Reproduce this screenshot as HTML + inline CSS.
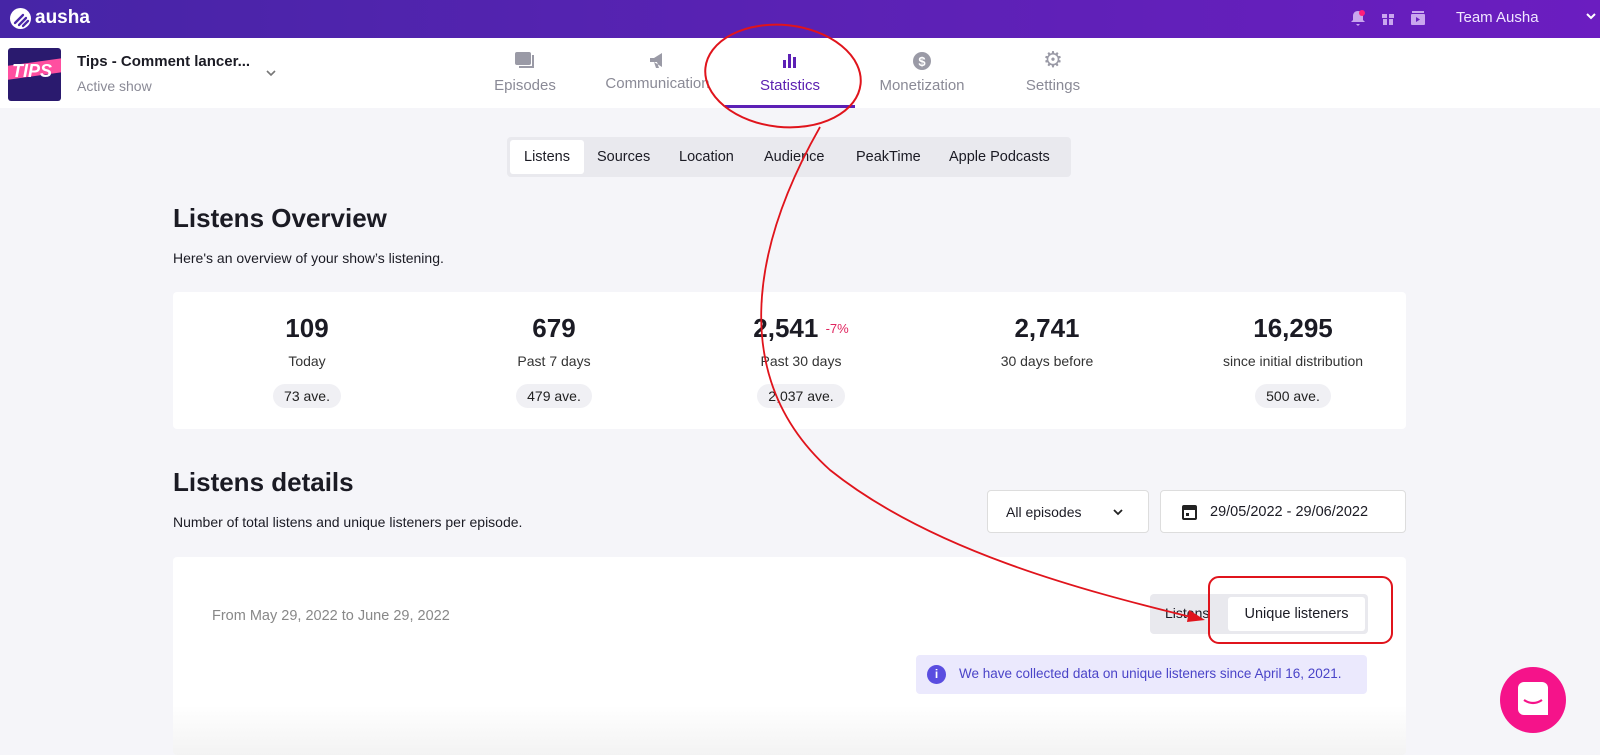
<!DOCTYPE html>
<html><head><style>
*{box-sizing:border-box;margin:0;padding:0}
body{width:1600px;height:755px;overflow:hidden;background:#f5f5f9;font-family:"Liberation Sans",sans-serif;color:#1b1b24;position:relative}
.top{position:absolute;left:0;top:0;width:1600px;height:38px;background:linear-gradient(90deg,#4625a6,#5a22b4 50%,#6b1dc0)}
.nav{position:absolute;top:38px;left:0;width:1600px;height:70px;background:#fff}
.abs{position:absolute}
.tab{position:absolute;top:0;height:70px;text-align:center;color:#8a8a96;font-size:15px}
.tab .ic{position:absolute;top:14px;left:50%;transform:translateX(-50%)}
.tab span{position:absolute;top:39px;left:0;right:0}
.seg{position:absolute;left:507px;top:137px;width:564px;height:40px;background:#e9e9ee;border-radius:4px}
.seg div{position:absolute;top:3px;height:34px;line-height:34px;font-size:14.5px;color:#1b1b24}
.card{position:absolute;background:#fff;border-radius:4px}
.stat{position:absolute;top:0;text-align:center;width:240px}
.stat b{display:block;font-size:26px;font-weight:600;margin-top:21px;height:34px}
.stat .l{font-size:14px;color:#333;margin-top:6px}
.pill{display:inline-block;background:#f0f0f4;border-radius:12px;padding:4px 11px;font-size:14px;margin-top:15px;color:#222}
</style></head><body>
<div class="top">
 <svg class="abs" style="left:10px;top:8px" width="21" height="21" viewBox="0 0 21 21"><circle cx="10.5" cy="10.5" r="10.5" fill="#fff"/><path d="M5 15l8-8M9 17l7-7M13 18l5-5" stroke="#4a27a8" stroke-width="2.3" stroke-linecap="round"/></svg>
 <div class="abs" style="left:35px;top:7px;color:#fff;font-size:19px;font-weight:bold">ausha</div>
 <svg class="abs" style="left:1351px;top:10px" width="14" height="16" viewBox="0 0 14 16"><path d="M7 1c3 0 5 2 5 5v4l2 2H0l2-2V6c0-3 2-5 5-5zM5 14h4l-2 2z" fill="#c9a6ee"/><circle cx="11" cy="3" r="3" fill="#ff1e7a"/></svg>
 <svg class="abs" style="left:1381px;top:10px" width="14" height="16" viewBox="0 0 14 16"><rect x="1" y="4" width="12" height="4" fill="#c9a6ee"/><rect x="2" y="9" width="10" height="6" fill="#c9a6ee"/><rect x="6" y="4" width="2" height="11" fill="#6a1fbf"/></svg>
 <svg class="abs" style="left:1410px;top:10px" width="16" height="16" viewBox="0 0 16 16"><rect x="2" y="1" width="12" height="2" fill="#c9a6ee"/><rect x="1" y="4" width="14" height="11" rx="1" fill="#c9a6ee"/><path d="M6 7l4 2.5-4 2.5z" fill="#6a1fbf"/></svg>
 <div class="abs" style="left:1456px;top:9px;color:#f0e6ff;font-size:15px">Team Ausha</div>
 <svg class="abs" style="left:1586px;top:13px" width="10" height="7" viewBox="0 0 10 7"><path d="M1 1l4 4 4-4" stroke="#fff" stroke-width="2" fill="none"/></svg>
</div>
<div class="nav">
 <div class="abs" style="left:8px;top:10px;width:53px;height:53px;border-radius:3px;background:#2a1a6e;overflow:hidden"><div style="position:absolute;top:14px;left:-4px;width:62px;height:14px;background:#ff4fa0;transform:skewY(-8deg)"></div><div style="position:absolute;top:13px;left:4px;color:#fff;font-weight:900;font-size:18px;font-style:italic">TIPS</div></div>
 <div class="abs" style="left:77px;top:15px;font-size:15px;font-weight:600">Tips - Comment lancer...</div>
 <div class="abs" style="left:77px;top:40px;font-size:14px;color:#8a8a96">Active show</div>
 <svg class="abs" style="left:266px;top:32px" width="10" height="7" viewBox="0 0 10 7"><path d="M1 1l4 4 4-4" stroke="#777" stroke-width="1.6" fill="none"/></svg>
 <div class="tab" style="left:485px;width:80px"><svg class="ic" width="20" height="18"><rect x="0" y="0" width="16" height="13" rx="2" fill="#9a9aa6"/><path d="M18 3v12H4" stroke="#9a9aa6" stroke-width="2" fill="none"/></svg><span>Episodes</span></div>
 <div class="tab" style="left:600px;width:115px"><svg class="ic" width="18" height="18" viewBox="0 0 18 18"><path d="M1 6h4l8-5v14l-8-5H1z M5 10l2 6h3l-2-6" fill="#9a9aa6"/></svg><span style="top:37px">Communication</span></div>
 <div class="tab" style="left:725px;width:130px;color:#5a1eb0"><svg class="ic" width="16" height="16"><rect x="1" y="8" width="3" height="8" fill="#5c20b5"/><rect x="6" y="2" width="3" height="14" fill="#5c20b5"/><rect x="11" y="5" width="3" height="11" fill="#5c20b5"/></svg><span>Statistics</span><div style="position:absolute;left:0;right:0;bottom:0;height:3px;background:#5c20b5"></div></div>
 <div class="tab" style="left:872px;width:100px"><svg class="ic" width="18" height="18"><circle cx="9" cy="9" r="9" fill="#9a9aa6"/><text x="9" y="14" font-size="13" fill="#fff" text-anchor="middle" font-family="Liberation Sans" font-weight="bold">$</text></svg><span>Monetization</span></div>
 <div class="tab" style="left:1013px;width:80px"><span class="ic" style="top:9px;font-size:22px;color:#9a9aa6;left:50%;right:auto">⚙</span><span>Settings</span></div>
</div>
<div class="seg">
 <div style="left:3px;width:74px;background:#fff;border-radius:3px;text-align:center">Listens</div>
 <div style="left:90px">Sources</div><div style="left:172px">Location</div><div style="left:257px">Audience</div><div style="left:349px">PeakTime</div><div style="left:442px">Apple Podcasts</div>
</div>
<div class="abs" style="left:173px;top:203px;font-size:26px;font-weight:bold">Listens Overview</div>
<div class="abs" style="left:173px;top:250px;font-size:14px">Here's an overview of your show’s listening.</div>
<div class="card" style="left:173px;top:292px;width:1233px;height:137px">
 <div class="stat" style="left:14px"><b>109</b><div class="l">Today</div><div class="pill">73 ave.</div></div>
 <div class="stat" style="left:261px"><b>679</b><div class="l">Past 7 days</div><div class="pill">479 ave.</div></div>
 <div class="stat" style="left:508px"><b>2,541 <span style="font-size:13px;color:#e0245e;font-weight:normal;vertical-align:4px">-7%</span></b><div class="l">Past 30 days</div><div class="pill">2,037 ave.</div></div>
 <div class="stat" style="left:754px"><b>2,741</b><div class="l">30 days before</div></div>
 <div class="stat" style="left:1000px"><b>16,295</b><div class="l">since initial distribution</div><div class="pill">500 ave.</div></div>
</div>
<div class="abs" style="left:173px;top:467px;font-size:26px;font-weight:bold">Listens details</div>
<div class="abs" style="left:173px;top:514px;font-size:14px">Number of total listens and unique listeners per episode.</div>
<div class="abs" style="left:987px;top:490px;width:162px;height:43px;background:#fff;border:1px solid #ddd;border-radius:4px;font-size:14px;padding:13px 18px">All episodes<svg style="position:absolute;right:25px;top:18px" width="10" height="7" viewBox="0 0 10 7"><path d="M1 1l4 4 4-4" stroke="#222" stroke-width="1.8" fill="none"/></svg></div>
<div class="abs" style="left:1160px;top:490px;width:246px;height:43px;background:#fff;border:1px solid #ddd;border-radius:4px;font-size:14.5px;padding:13px 0 0 49px"><svg style="position:absolute;left:21px;top:13px" width="15" height="16"><rect x="1" y="2" width="13" height="13" rx="1" stroke="#222" stroke-width="2" fill="none"/><rect x="1" y="2" width="13" height="4" fill="#222"/><rect x="4" y="9" width="3" height="3" fill="#222"/></svg>29/05/2022 - 29/06/2022</div>
<div class="card" style="left:173px;top:557px;width:1233px;height:198px;background:linear-gradient(#fff 75%,#f3f3f3)">
 <div class="abs" style="left:39px;top:51px;font-size:14.5px;color:#888">From May 29, 2022 to June 29, 2022</div>
 <div class="abs" style="left:977px;top:37px;width:218px;height:40px;background:#e9e9ee;border-radius:4px"><div class="abs" style="left:15px;top:11px;font-size:14px">Listens</div><div class="abs" style="left:78px;top:3px;width:137px;height:34px;background:#fff;border-radius:3px;text-align:center;line-height:34px;font-size:14.5px">Unique listeners</div></div>
 <div class="abs" style="left:743px;top:98px;width:451px;height:39px;background:#ebe9fd;border-radius:4px"><div class="abs" style="left:11px;top:10px;width:19px;height:19px;border-radius:50%;background:#5a4de0;color:#fff;font-size:12px;font-weight:bold;text-align:center;line-height:19px">i</div><div class="abs" style="left:43px;top:11px;font-size:13.5px;color:#4a44c8">We have collected data on unique listeners since April 16, 2021.</div></div>
</div>
<div class="abs" style="left:1500px;top:667px;width:66px;height:66px;border-radius:50%;background:#f5138a"><div class="abs" style="left:18px;top:15px;width:30px;height:33px;background:#fff;border-radius:6px 6px 0 6px"></div><svg class="abs" style="left:22px;top:30px" width="22" height="10"><path d="M2 3q9 6 18 0" stroke="#f5138a" stroke-width="2.2" fill="none"/></svg></div>
<svg class="abs" style="left:0;top:0" width="1600" height="755">
 <ellipse cx="783" cy="76" rx="78" ry="51" stroke="#e0141c" stroke-width="2" fill="none" transform="rotate(6 783 76)"/>
 <rect x="1209" y="577" width="183" height="66" rx="10" stroke="#e0141c" stroke-width="2" fill="none"/>
 <path d="M820 127C750 250 730 380 830 470C930 550 1080 590 1195 618" stroke="#e0141c" stroke-width="1.8" fill="none"/>
 <path d="M1205 620l-16-10 -2 12z" fill="#e0141c"/>
</svg>
</body></html>
